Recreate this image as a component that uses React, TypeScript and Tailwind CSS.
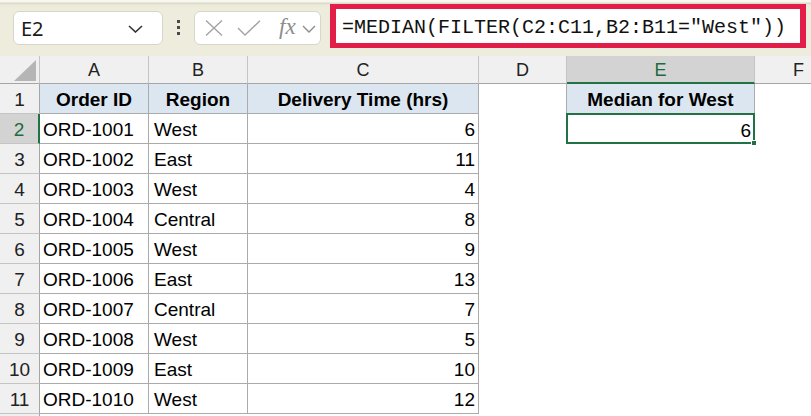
import React from "react";

const rows: [string, string, string][] = [
  ["ORD-1001", "West", "6"],
  ["ORD-1002", "East", "11"],
  ["ORD-1003", "West", "4"],
  ["ORD-1004", "Central", "8"],
  ["ORD-1005", "West", "9"],
  ["ORD-1006", "East", "13"],
  ["ORD-1007", "Central", "7"],
  ["ORD-1008", "West", "5"],
  ["ORD-1009", "East", "10"],
  ["ORD-1010", "West", "12"],
];

const font = { fontFamily: '"Liberation Sans", Arial, sans-serif' };

function FormulaBar() {
  return (
    <div className="h-[56px] flex items-start bg-[linear-gradient(to_bottom,#f8f7f0_0px,#f8f7f0_2px,#d8d6c6_3px,#ebe9d8_5px,#eeecdc_8px)]">
      <div className="ml-[13px] mt-[11px] w-[150px] h-[34px] shrink-0 rounded-[6px] border border-[#d8d6ca] bg-white flex items-center justify-between pl-[7px] pr-[19px]">
        <span className="text-[20px] text-[#1a1a1a] pt-[1px]" style={{ fontFamily: '"Noto Sans", "Liberation Sans", sans-serif' }}>E2</span>
        <svg width="15" height="8" viewBox="0 0 15 8" className="mt-[2px]">
          <path d="M1 1 L7.5 7 L14 1" fill="none" stroke="#333" strokeWidth="1.6" />
        </svg>
      </div>
      <div className="ml-[14px] mt-[20px] flex flex-col gap-[3px] shrink-0">
        <div className="w-[3px] h-[3px] bg-[#4a4a4a]" />
        <div className="w-[3px] h-[3px] bg-[#4a4a4a]" />
        <div className="w-[3px] h-[3px] bg-[#4a4a4a]" />
      </div>
      <div className="ml-[14px] mt-[11px] w-[127px] h-[34px] shrink-0 rounded-[6px] border border-[#d8d6ca] bg-white flex items-center pl-[10px]">
        <svg width="18" height="16" viewBox="0 0 18 16">
          <path d="M1 0.5 L17 15.5 M17 0.5 L1 15.5" stroke="#a3a3a3" strokeWidth="1.4" fill="none" />
        </svg>
        <svg width="24" height="16" viewBox="0 0 24 16" className="ml-[14px]">
          <path d="M1 8 L8 15 L23 0.8" stroke="#a3a3a3" strokeWidth="1.4" fill="none" />
        </svg>
        <span
          className="ml-[18px] text-[23px] italic text-[#8c8c8c] leading-none pb-[3px]"
          style={{ fontFamily: '"Liberation Serif", "Times New Roman", serif' }}
        >
          fx
        </span>
        <svg width="14" height="8" viewBox="0 0 14 8" className="ml-[6px] mt-[2px]">
          <path d="M1 1 L7 7 L13 1" fill="none" stroke="#8c8c8c" strokeWidth="1.4" />
        </svg>
      </div>
      <div className="ml-[9px] mt-[4px] w-[476px] h-[44px] shrink-0 border-[5px] border-x-[6px] border-[#e11d48] bg-white flex items-center pl-[6px] pt-[3px]">
        <span className="text-[20px] text-[#111] whitespace-pre" style={{ fontFamily: '"Liberation Mono", "DejaVu Sans Mono", monospace' }}>
          =MEDIAN(FILTER(C2:C11,B2:B11="West"))
        </span>
      </div>
    </div>
  );
}

function ColHeader() {
  const h = "h-[28px] shrink-0 flex items-center justify-center pt-[2px] text-[18px] text-[#222] border-r border-[#c4c4c4] border-b border-b-[#a6a6a6] bg-[#f0f0f0]";
  return (
    <div className="flex">
      <div className="w-[40px] h-[28px] shrink-0 border-r border-[#c4c4c4] border-b border-b-[#a6a6a6] bg-[#f0f0f0] relative">
        <svg width="22" height="21" viewBox="0 0 22 21" className="absolute left-[14px] top-[4px]">
          <path d="M22 0 L22 21 L0 21 Z" fill="#b5b5b5" />
        </svg>
      </div>
      <div className={`w-[109px] ${h}`}>A</div>
      <div className={`w-[99px] ${h}`}>B</div>
      <div className={`w-[231px] ${h}`}>C</div>
      <div className={`w-[88px] ${h}`}>D</div>
      <div className="w-[188px] h-[28px] shrink-0 flex items-center justify-center pt-[2px] text-[18px] text-[#1d6b3c] border-r border-[#c4c4c4] border-b-2 border-b-[#217346] bg-[#d3d3d3]">E</div>
      <div className={`w-[88px] ${h}`}>F</div>
    </div>
  );
}

function RowHead({ n, active }: { n: number; active?: boolean }) {
  return active ? (
    <div className="w-[40px] h-[30px] shrink-0 flex items-center justify-center pt-[4px] text-[19px] text-[#1d6b3c] bg-[#d3d3d3] border-r-2 border-r-[#217346] border-b border-b-[#c4c4c4]">
      {n}
    </div>
  ) : (
    <div className="w-[40px] h-[30px] shrink-0 flex items-center justify-center pt-[4px] text-[19px] text-[#222] bg-[#f0f0f0] border-r border-r-[#a6a6a6] border-b border-b-[#c4c4c4]">
      {n}
    </div>
  );
}

const cell = "h-[30px] shrink-0 flex items-center pt-[4px] text-[19px] text-black border-r border-b border-[#ababab] overflow-hidden whitespace-nowrap";
const hcell = "h-[30px] shrink-0 flex items-center justify-center pt-[4px] text-[19px] font-bold text-black bg-[#dce6f1] border-r border-b border-[#ababab] whitespace-nowrap";

export default function App() {
  return (
    <div className="w-[811px] h-[416px] overflow-hidden bg-white" style={font}>
      <FormulaBar />
      <ColHeader />
      <div className="flex">
        <RowHead n={1} />
        <div className={`w-[109px] ${hcell}`}>Order ID</div>
        <div className={`w-[99px] ${hcell}`}>Region</div>
        <div className={`w-[231px] ${hcell}`}>Delivery Time (hrs)</div>
        <div className="w-[87px] shrink-0" />
        <div className={`w-[189px] border-l ${hcell}`}>Median for West</div>
      </div>
      {rows.map((r, i) => (
        <div className="flex" key={i}>
          <RowHead n={i + 2} active={i === 0} />
          <div className={`w-[109px] pl-[3px] ${cell}`}>{r[0]}</div>
          <div className={`w-[99px] pl-[5px] ${cell}`}>{r[1]}</div>
          <div className={`w-[231px] justify-end pr-[3px] ${cell}`}>{r[2]}</div>
          {i === 0 && (
            <>
              <div className="w-[87px] shrink-0" />
              <div className="relative w-[189px] h-[31px] -mt-[1px] shrink-0 border-2 border-[#217346] flex items-center justify-end pr-[2px] pt-[5px] text-[19px] text-black">
                6
                <div className="absolute -right-[4px] -bottom-[4px] w-[6px] h-[6px] bg-[#217346] border border-white" />
              </div>
            </>
          )}
        </div>
      ))}
      <div className="flex">
        <div className="w-[40px] h-[30px] shrink-0 bg-[#f0f0f0] border-r border-r-[#a6a6a6]" />
      </div>
    </div>
  );
}
